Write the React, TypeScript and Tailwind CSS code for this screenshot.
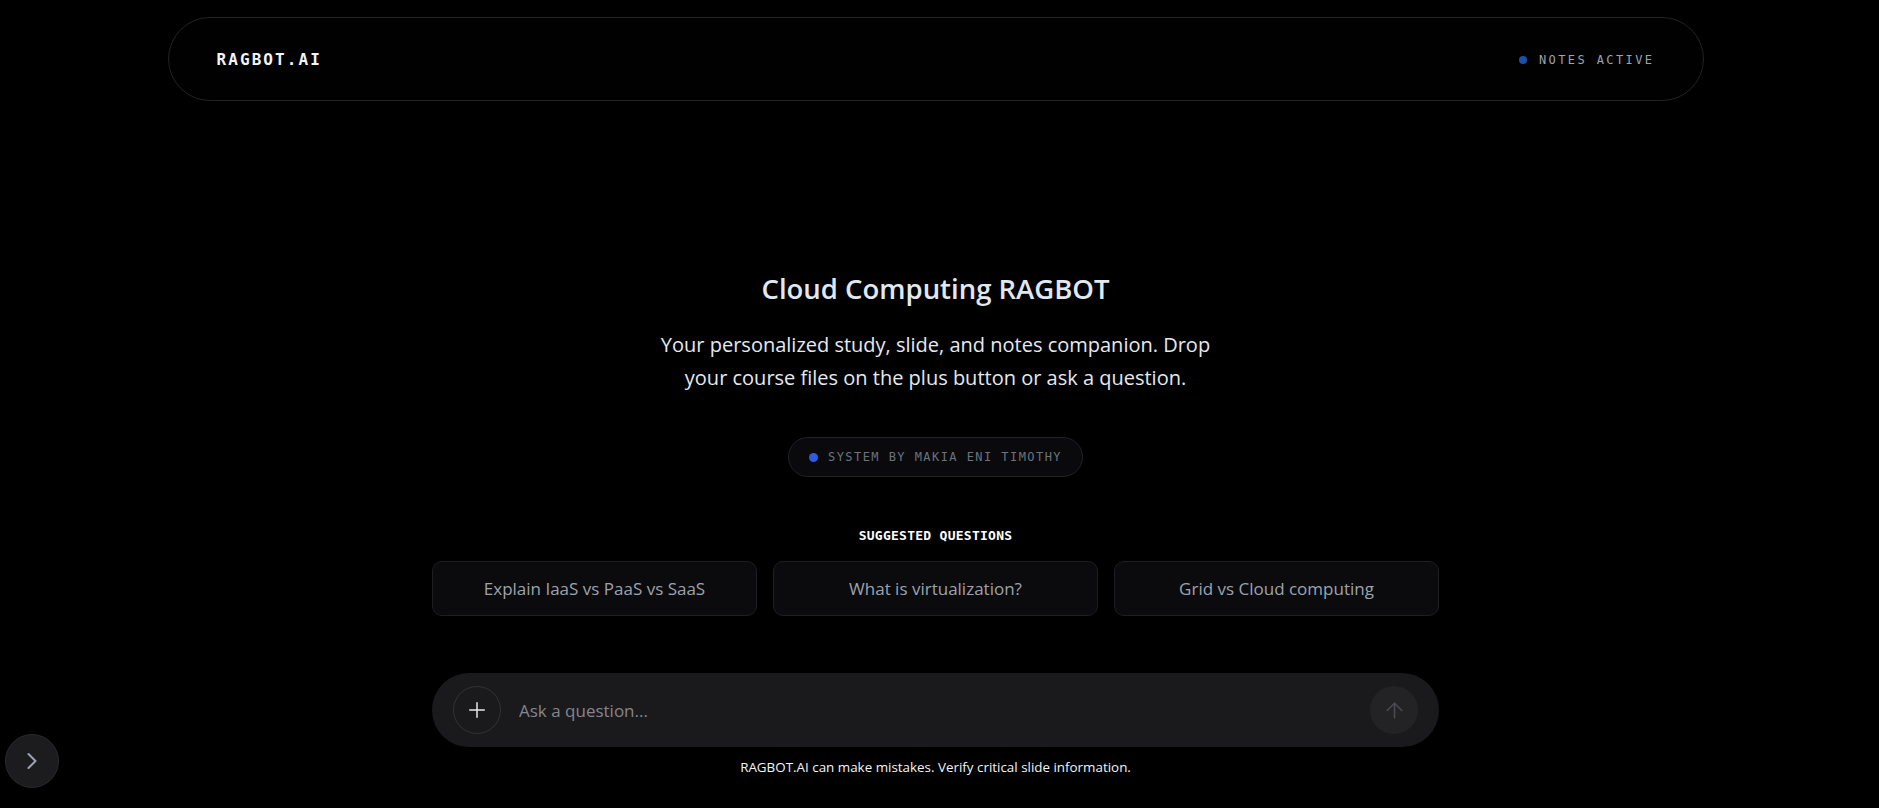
import React from "react";
import { ArrowUp, ChevronRight } from "lucide-react";

const suggestions = [
  "Explain IaaS vs PaaS vs SaaS",
  "What is virtualization?",
  "Grid vs Cloud computing",
];

function PlusGlyph() {
  return (
    <svg width="16" height="16" viewBox="0 0 16 16" fill="none" stroke="#e5e7eb" strokeWidth="1.5" strokeLinecap="round">
      <path d="M8 0.75v14.5M0.75 8h14.5" />
    </svg>
  );
}

export default function App() {
  return (
    <div className="relative h-[808px] w-full overflow-hidden bg-black font-['Open_Sans',sans-serif]">
      <div className="flex h-full flex-col items-center pr-2">
        {/* top bar */}
        <header className="mt-[17px] flex h-[84px] w-full max-w-[1536px] items-center justify-between rounded-full border border-[#232325] bg-[#010101] px-12 pt-[1px]">
          <span className="font-['DejaVu_Sans_Mono',monospace] text-[16px] font-bold tracking-[0.13em] text-[#f3f4f6]">
            RAGBOT.AI
          </span>
          <div className="flex items-center gap-3">
            <span className="h-2 w-2 rounded-full bg-[#1e4fa8]" />
            <span className="font-['DejaVu_Sans_Mono',monospace] text-[12px] tracking-[0.2em] text-[#9ca3af]">
              NOTES ACTIVE
            </span>
          </div>
        </header>

        {/* hero */}
        <h1 className="mt-[170px] text-[27.5px] font-semibold leading-[36px] text-[#e2e8f0]">
          Cloud Computing RAGBOT
        </h1>
        <p className="mt-[21px] max-w-[580px] text-center text-[20px] leading-[33px] text-[#e5e9f0]">
          Your personalized study, slide, and notes companion. Drop your course files on the plus button or ask a question.
        </p>

        <div className="mt-[43px] flex h-10 items-center gap-2.5 rounded-full border border-[#222226] bg-[#0a0a0c] px-5">
          <span className="h-[9px] w-[9px] rounded-full bg-[#2f5be0]" />
          <span className="font-['DejaVu_Sans_Mono',monospace] text-[12px] tracking-[0.12em] text-[#6b7280]">
            SYSTEM BY MAKIA ENI TIMOTHY
          </span>
        </div>

        {/* suggestions */}
        <div className="mt-[51px] font-['DejaVu_Sans_Mono',monospace] text-[13px] font-bold leading-4 tracking-[0.02em] text-white">
          SUGGESTED QUESTIONS
        </div>
        <div className="mt-[17px] grid w-full max-w-[1007px] grid-cols-3 gap-4">
          {suggestions.map((q) => (
            <button
              key={q}
              className="flex h-[55px] items-center justify-center rounded-[10px] border border-[#1e1e21] bg-[#0b0b0d] text-[17px] text-[#9ca3af]"
            >
              {q}
            </button>
          ))}
        </div>

        {/* composer */}
        <div className="mt-[57px] flex h-[74px] w-full max-w-[1007px] items-center rounded-full bg-[#1a1a1c] pl-[21px] pr-[21px]">
          <button className="flex h-12 w-12 shrink-0 items-center justify-center rounded-full border border-white/10">
            <PlusGlyph />
          </button>
          <input
            className="ml-[18px] h-full flex-1 bg-transparent text-[17px] text-[#e5e7eb] outline-none placeholder:text-[#85858e]"
            placeholder="Ask a question..."
          />
          <button className="flex h-12 w-12 shrink-0 items-center justify-center rounded-full bg-[#232326]">
            <ArrowUp size={25} strokeWidth={1.5} color="#4b4b52" />
          </button>
        </div>
        <p className="mt-[11px] text-[13.4px] leading-[18px] text-[#f1f5f9]">
          RAGBOT.AI can make mistakes. Verify critical slide information.
        </p>
      </div>

      {/* sidebar toggle */}
      <button className="absolute left-[5px] top-[734px] flex h-[54px] w-[54px] items-center justify-center rounded-full border border-[#2a2a2e] bg-[#1c1c1f]">
        <ChevronRight size={28} strokeWidth={1.75} color="#9ca3af" />
      </button>
    </div>
  );
}
